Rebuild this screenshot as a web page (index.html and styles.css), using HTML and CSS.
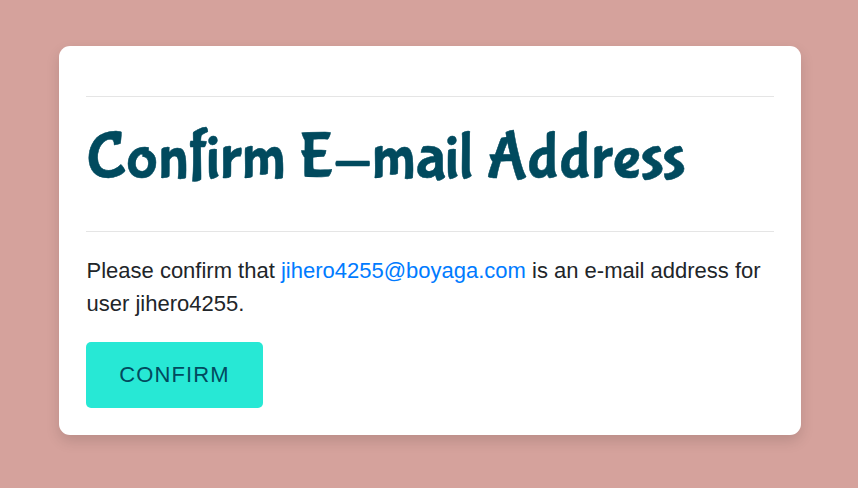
FILE: index.html
```html
<!DOCTYPE html>
<html lang="en">
<head>
<meta charset="utf-8">
<title>Confirm E-mail Address</title>
<link rel="stylesheet" href="styles.css">
</head>
<body>
<main class="card">
<hr class="rule">
<h1 class="title">Confirm E-mail Address</h1>
<hr class="rule">
<p class="message">Please confirm that <a class="email" href="mailto:jihero4255@boyaga.com">jihero4255@boyaga.com</a> is an e-mail address for user jihero4255.</p>
<button class="confirm" type="submit">CONFIRM</button>
</main>
</body>
</html>
```

FILE: styles.css
```css
* { box-sizing: border-box; }
body {
  margin: 0;
  height: 488px;
  padding: 46px 57px 0 59px;
  background: #d5a29c;
  font-family: "Liberation Sans", Arial, sans-serif;
  color: #212529;
}
.card {
  height: 389px;
  padding: 50px 27px 0;
  background: #fff;
  border-radius: 11px;
  box-shadow: 0 6px 14px rgba(0, 0, 0, .13);
}
.rule {
  height: 1px;
  margin: 0;
  border: 0;
  background: #e5e5e5;
}
.title {
  height: 134px;
  margin: 0;
  padding: 22px 0 0 .5px;
  color: #014a5e;
  font: 500 66px/79px "Bubblegum Sans", "Open Sans", sans-serif;
  -webkit-text-stroke: .5px #014a5e;
  white-space: nowrap;
}
.message {
  margin: 22px 0 0;
  padding-left: .5px;
  font-size: 22px;
  line-height: 33px;
}
.email {
  color: #007bff;
  text-decoration: none;
}
.confirm {
  display: block;
  width: 177px;
  height: 66px;
  margin-top: 22px;
  padding: 0;
  border: 0;
  border-radius: 5px;
  background: #27e8d5;
  color: #014a5e;
  font: 22px/66px "Liberation Sans", Arial, sans-serif;
  letter-spacing: 1.1px;
}
```
